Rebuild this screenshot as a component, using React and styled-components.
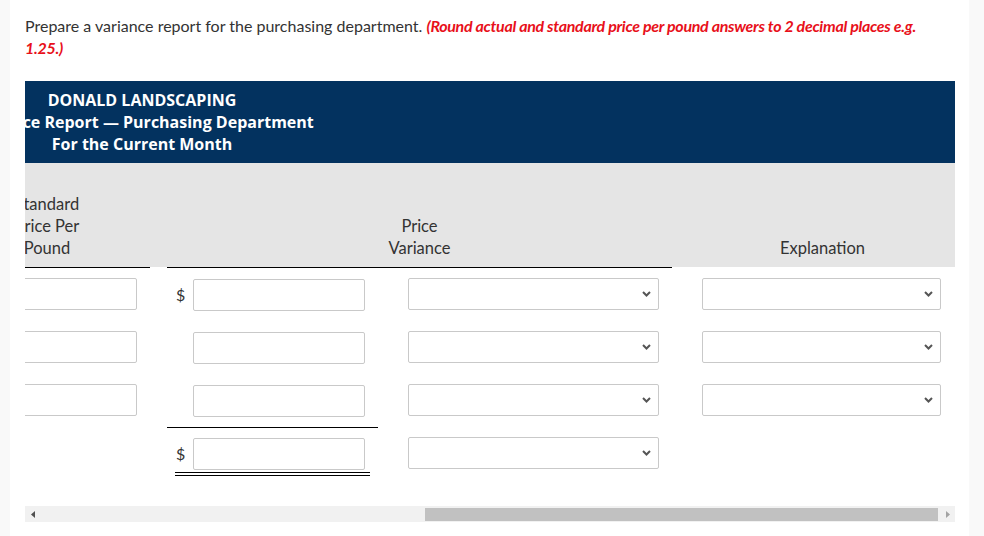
import React from "react";
import styled, { createGlobalStyle } from "styled-components";

const Global = createGlobalStyle`
  html, body {
    margin: 0;
    padding: 0;
    background: #f9f9f9;
    font-family: Lato, "Open Sans", sans-serif;
    color: #333;
  }
`;

// column widths of the (horizontally scrolled) report table
const W = { a: 206, g1: 17, amt: 211, sel: 294, g2: 18, exp: 265 };

export default function App() {
  const rows = [
    { dollar: true, exp: true },
    { dollar: false, exp: true },
    { dollar: false, exp: true },
  ];

  return (
    <>
      <Global />
      <Main>
        <Prompt>
          Prepare a variance report for the purchasing department.{" "}
          <Hint>(Round actual and standard price per pound answers to 2 decimal places e.g. 1.25.)</Hint>
        </Prompt>

        <Panel>
          <TitleBand>
            <Title>
              <div>DONALD LANDSCAPING</div>
              <div>Variance Report — Purchasing Department</div>
              <div>For the Current Month</div>
            </Title>
          </TitleBand>

          <HeadBand>
            <Row>
              <HeadCell w={W.a} lined>
                Standard
                <br />
                Price Per
                <br />
                Pound
              </HeadCell>
              <Spacer w={W.g1} />
              <HeadCell w={W.amt + W.sel} lined>
                Price
                <br />
                Variance
              </HeadCell>
              <Spacer w={W.g2} />
              <HeadCell w={W.exp}>Explanation</HeadCell>
            </Row>
          </HeadBand>

          <Body>
            {rows.map((r, i) => (
              <Row key={i}>
                <Cell w={W.a}>
                  <Input w={193} />
                </Cell>
                <Spacer w={W.g1} />
                <AmountCell w={W.amt}>
                  <Dollar>{r.dollar ? "$" : ""}</Dollar>
                  <Input w={172} />
                </AmountCell>
                <SelectCell w={W.sel} pl={30}>
                  <Select w={251} />
                </SelectCell>
                <Spacer w={W.g2} />
                <SelectCell w={W.exp} pl={12}>
                  {r.exp && <Select w={239} />}
                </SelectCell>
              </Row>
            ))}

            <Row>
              <Cell w={W.a} />
              <Spacer w={W.g1} />
              <AmountCell w={W.amt} total>
                <DoubleLine>
                  <Dollar>$</Dollar>
                  <Input w={172} />
                </DoubleLine>
              </AmountCell>
              <SelectCell w={W.sel} pl={30}>
                <Select w={251} />
              </SelectCell>
            </Row>
          </Body>

          <ScrollBar>
            <ArrowBtn>
              <svg width="4" height="7" viewBox="0 0 4 7">
                <path d="M4 0 L0 3.5 L4 7 Z" fill="#505050" />
              </svg>
            </ArrowBtn>
            <Track>
              <Thumb />
            </Track>
            <ArrowBtn>
              <svg width="4" height="7" viewBox="0 0 4 7">
                <path d="M0 0 L4 3.5 L0 7 Z" fill="#a3a3a3" />
              </svg>
            </ArrowBtn>
          </ScrollBar>
        </Panel>
      </Main>
    </>
  );
}

function Select({ w }) {
  return (
    <SelectBox w={w}>
      <svg width="9" height="6" viewBox="0 0 9 6">
        <path d="M1 1 L4.5 4.5 L8 1" fill="none" stroke="#555" strokeWidth="2" />
      </svg>
    </SelectBox>
  );
}

const Main = styled.div`
  margin-left: 10px;
  width: 959px;
  height: 536px;
  background: #fff;
  box-sizing: border-box;
  padding: 15px 14px 0 15px;
`;

const Prompt = styled.p`
  margin: 0;
  width: 905px;
  font-size: 16px;
  line-height: 22px;
  color: #333;
`;

const Hint = styled.span`
  color: #e8101a;
  font-weight: 700;
  font-style: italic;
  letter-spacing: -0.3px;
`;

const Panel = styled.div`
  margin-top: 22px;
  width: 930px;
  overflow: hidden;
`;

const TitleBand = styled.div`
  background: #03325f;
  height: 82px;
  box-sizing: border-box;
  padding-top: 8px;
`;

const Title = styled.div`
  margin-left: -81px;
  width: 396px;
  text-align: center;
  color: #fff;
  font-family: "Open Sans", Lato, sans-serif;
  font-weight: 700;
  font-size: 16px;
  line-height: 22px;
  white-space: nowrap;
`;

const HeadBand = styled.div`
  background: #e5e5e5;
  height: 104px;
  display: flex;
  align-items: flex-end;
`;

const Row = styled.div`
  display: flex;
  margin-left: -81px;
  align-items: flex-end;
`;

const Spacer = styled.div`
  flex: none;
  width: ${(p) => p.w}px;
`;

const HeadCell = styled.div`
  flex: none;
  width: ${(p) => p.w}px;
  box-sizing: border-box;
  text-align: center;
  font-size: 16.5px;
  line-height: 22px;
  color: #333;
  padding-bottom: 8px;
  border-bottom: 1px solid ${(p) => (p.lined ? "#000" : "transparent")};
  margin-bottom: -1px;
`;

const Body = styled.div`
  display: flex;
  flex-direction: column;
  padding-top: 1px;
`;

const Cell = styled.div`
  flex: none;
  width: ${(p) => p.w}px;
  height: 53px;
  box-sizing: border-box;
  padding-top: 10px;
`;

const AmountCell = styled(Cell)`
  display: flex;
  align-items: flex-start;
  padding-left: 8px;
  border-top: 1px solid ${(p) => (p.total ? "#000" : "transparent")};
`;

const SelectCell = styled(Cell)`
  padding-left: ${(p) => p.pl}px;
`;

const DoubleLine = styled.div`
  display: flex;
  align-items: flex-start;
  width: 195px;
  padding-bottom: 2px;
  border-bottom: 4px double #000;
`;

const Dollar = styled.span`
  flex: none;
  width: 18px;
  height: 32px;
  line-height: 32px;
  font-size: 16px;
  color: #333;
  padding-left: 1px;
  box-sizing: border-box;
`;

const Input = styled.div`
  flex: none;
  width: ${(p) => p.w}px;
  height: 32px;
  box-sizing: border-box;
  border: 1px solid #c9c9c9;
  border-radius: 2px;
  background: #fff;
`;

const SelectBox = styled(Input)`
  display: flex;
  align-items: center;
  justify-content: flex-end;
  padding-right: 7px;
`;

const ScrollBar = styled.div`
  margin-top: 26px;
  height: 16px;
  display: flex;
  background: #f1f1f1;
`;

const ArrowBtn = styled.div`
  flex: none;
  width: 15px;
  display: flex;
  align-items: center;
  justify-content: center;
`;

const Track = styled.div`
  flex: 1;
  display: flex;
  justify-content: flex-end;
  align-items: center;
  padding-right: 2px;
`;

const Thumb = styled.div`
  width: 513px;
  height: 13px;
  background: #c1c1c1;
`;
